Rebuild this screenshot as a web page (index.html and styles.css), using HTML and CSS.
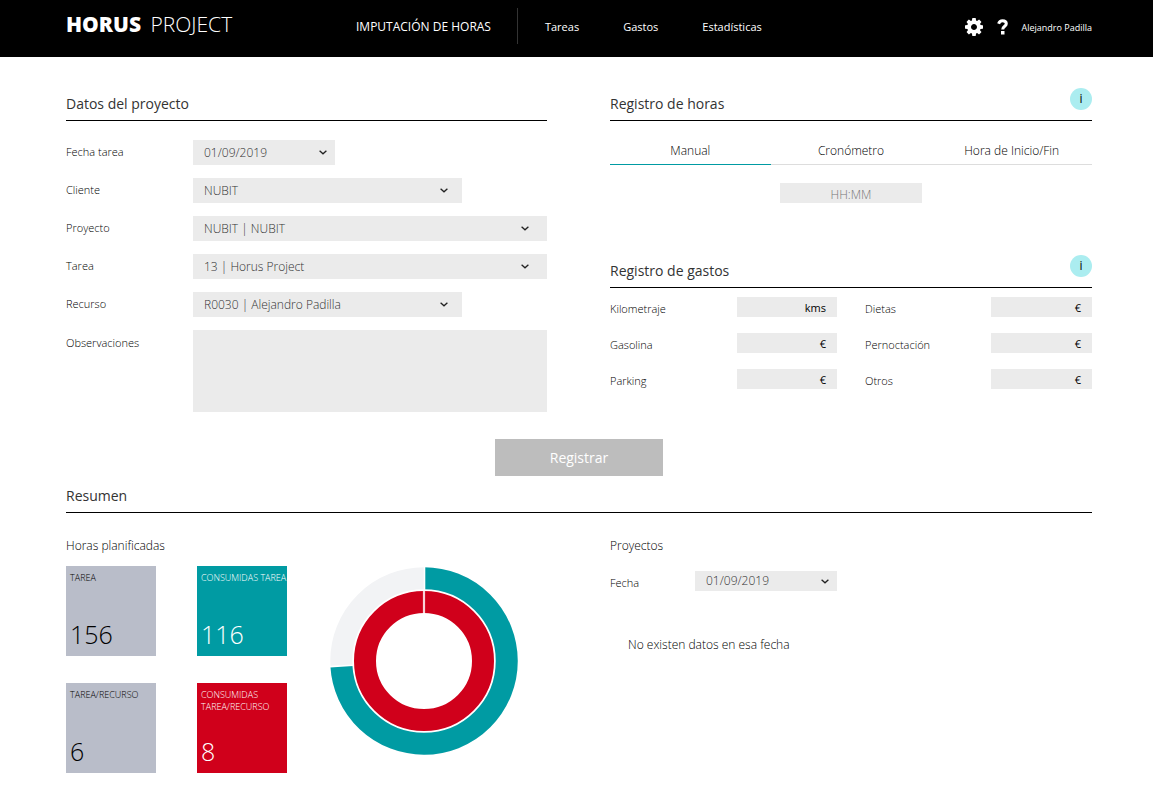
FILE: index.html
```html
<!DOCTYPE html>
<html lang="es">
<head>
<meta charset="utf-8">
<meta name="viewport" content="width=device-width, initial-scale=1">
<title>Horus Project</title>
<link rel="stylesheet" href="styles.css">
</head>
<body>
<svg class="defs" aria-hidden="true">
  <symbol id="chevron" viewBox="0 0 8 5"><path d="M0.6 0.8 L4 3.8 L7.4 0.8" fill="none" stroke="#222" stroke-width="1.3"/></symbol>
</svg>
<header class="topbar">
  <a class="brand" href="#"><strong>HORUS</strong> PROJECT</a>
  <nav class="nav">
    <a class="nav-main" href="#">IMPUTACIÓN DE HORAS</a>
    <a href="#">Tareas</a>
    <a href="#">Gastos</a>
    <a href="#">Estadísticas</a>
  </nav>
  <div class="user">
    <button class="icon-btn" type="button" aria-label="Configuración">
      <svg width="18" height="18" viewBox="0 0 1536 1536"><path fill="#fff" d="M1024 768q0-106-75-181t-181-75-181 75-75 181 75 181 181 75 181-75 75-181zm512-109v222q0 12-8 23t-20 13l-185 28q-19 54-39 91 35 50 107 138 10 12 10 25t-9 23q-27 37-99 108t-94 71q-12 0-26-9l-138-108q-44 23-91 38-16 136-29 186-7 28-36 28H657q-14 0-24.500-8.500T621 1506l-28-184q-49-16-90-37l-141 107q-10 9-25 9-14 0-25-11-126-114-165-168-7-10-7-23 0-12 8-23 15-21 51-66.500t54-70.500q-27-50-41-99L29 913q-13-2-21-12.500T0 877V655q0-12 8-23t19-13l186-28q14-46 39-92-40-57-107-138-10-12-10-24 0-10 9-23 26-36 98.500-107.500T337 135q13 0 26 10l138 107q44-23 91-38 16-136 29-186 7-28 36-28h222q14 0 24.500 8.500T915 30l28 184q49 16 90 37l142-107q9-9 24-9 13 0 25 10 129 119 165 170 7 8 7 22 0 12-8 23-15 21-51 66.500t-54 70.500q26 50 41 98l183 28q13 2 21 12.500t8 23.500z"/></svg>
    </button>
    <button class="icon-btn" type="button" aria-label="Ayuda">
      <svg width="11" height="16" viewBox="0 0 11 16"><path d="M1.600 4.800 C2.300 2.700 3.700 1.700 5.500 1.700 C7.700 1.700 9.300 2.900 9.300 4.700 C9.300 7.400 5.700 7.200 5.700 10.600" fill="none" stroke="#fff" stroke-width="3"/><rect x="4" y="12" width="3.500" height="3.500" fill="#fff"/></svg>
    </button>
    <a class="user-name" href="#">Alejandro Padilla</a>
  </div>
</header>

<main class="page">
  <form class="entry">
    <section>
      <div class="section-head"><h2>Datos del proyecto</h2></div>
      <div class="project-fields">
        <label for="fecha-tarea">Fecha tarea</label>
        <div class="select short"><select id="fecha-tarea"><option>01/09/2019</option></select><svg><use href="#chevron"/></svg></div>
        <label for="cliente">Cliente</label>
        <div class="select medium"><select id="cliente"><option>NUBIT</option></select><svg><use href="#chevron"/></svg></div>
        <label for="proyecto">Proyecto</label>
        <div class="select full"><select id="proyecto"><option>NUBIT | NUBIT</option></select><svg><use href="#chevron"/></svg></div>
        <label for="tarea">Tarea</label>
        <div class="select full"><select id="tarea"><option>13 | Horus Project</option></select><svg><use href="#chevron"/></svg></div>
        <label for="recurso">Recurso</label>
        <div class="select medium"><select id="recurso"><option>R0030 | Alejandro Padilla</option></select><svg><use href="#chevron"/></svg></div>
        <label class="label-top" for="observaciones">Observaciones</label>
        <textarea id="observaciones"></textarea>
      </div>
    </section>

    <div>
      <section class="hours">
        <div class="section-head"><h2>Registro de horas</h2><button class="info" type="button">i</button></div>
        <div class="tabs" role="tablist">
          <button class="tab active" type="button" role="tab" aria-selected="true">Manual</button>
          <button class="tab" type="button" role="tab" aria-selected="false">Cronómetro</button>
          <button class="tab" type="button" role="tab" aria-selected="false">Hora de Inicio/Fin</button>
        </div>
        <input class="time" type="text" placeholder="HH:MM" aria-label="Horas">
      </section>
      <section>
        <div class="section-head"><h2>Registro de gastos</h2><button class="info" type="button">i</button></div>
        <div class="expenses">
          <label for="km">Kilometraje</label>
          <div class="amount"><input id="km" type="text"><span>kms</span></div>
          <label for="dietas">Dietas</label>
          <div class="amount"><input id="dietas" type="text"><span>€</span></div>
          <label for="gasolina">Gasolina</label>
          <div class="amount"><input id="gasolina" type="text"><span>€</span></div>
          <label for="pernoctacion">Pernoctación</label>
          <div class="amount"><input id="pernoctacion" type="text"><span>€</span></div>
          <label for="parking">Parking</label>
          <div class="amount"><input id="parking" type="text"><span>€</span></div>
          <label for="otros">Otros</label>
          <div class="amount"><input id="otros" type="text"><span>€</span></div>
        </div>
      </section>
    </div>
    <button class="submit" type="submit">Registrar</button>
  </form>

  <section>
    <div class="section-head summary-head"><h2>Resumen</h2></div>
    <div class="summary">
      <div>
        <h3>Horas planificadas</h3>
        <div class="planned">
          <div class="tiles">
            <div class="tile grey"><span>TAREA</span><b>156</b></div>
            <div class="tile teal"><span>CONSUMIDAS TAREA</span><b>116</b></div>
            <div class="tile grey"><span>TAREA/RECURSO</span><b>6</b></div>
            <div class="tile red"><span>CONSUMIDAS TAREA/RECURSO</span><b>8</b></div>
          </div>
          <svg class="chart" width="188" height="188" viewBox="-94 -94 188 188" role="img" aria-label="Horas consumidas">
            <g fill="none" transform="rotate(-90)">
              <circle r="82.750" stroke="#f2f3f5" stroke-width="22"/>
              <circle r="82.750" stroke="#009ba3" stroke-width="22" pathLength="156" stroke-dasharray="115.500 40.500"/>
              <circle r="59" stroke="#d0001b" stroke-width="22"/>
            </g>
            <path d="M0.500 -95 V-71" stroke="#fff" stroke-width="1.600"/>
            <path d="M0 -95 V-71" stroke="#fff" stroke-width="1.600" transform="rotate(266.600)"/>
            <path d="M0 -70 V-48" stroke="#f8d3d8" stroke-width="2.200"/>
          </svg>
        </div>
      </div>
      <div>
        <h3>Proyectos</h3>
        <div class="project-date">
          <label for="fecha">Fecha</label>
          <div class="select short low"><select id="fecha"><option>01/09/2019</option></select><svg><use href="#chevron"/></svg></div>
        </div>
        <p class="empty">No existen datos en esa fecha</p>
      </div>
    </div>
  </section>
</main>
</body>
</html>
```

FILE: styles.css
```css
* { box-sizing: border-box; }
body {
  margin: 0;
  background: #fff;
  color: #000;
  font: 300 12px/16px "Open Sans", "Noto Sans", sans-serif;
}
h2, h3, p { margin: 0; font-weight: 300; }
button, input, select, textarea { font: inherit; color: inherit; border: 0; border-radius: 0; padding: 0; }
button { background: none; cursor: pointer; }
a { color: inherit; text-decoration: none; }
label { font-size: 11px; }
.defs { position: absolute; width: 0; height: 0; }

.topbar {
  display: flex;
  height: 57px;
  padding: 0 61px 0 66px;
  background: #000;
  color: #fff;
}
.brand { width: 290px; padding-top: 12px; font-size: 21px; line-height: 24px; }
.brand strong { font-weight: 800; margin-right: 4px; }
.nav { display: flex; align-items: center; gap: 44px; padding-bottom: 5px; font-size: 11px; font-weight: 400; }
.nav a { padding-top: 2px; }
.nav .nav-main { display: flex; align-items: center; height: 36px; padding-right: 26px; margin-right: -17px; border-right: 1px solid #333; font-size: 12px; }
.user { display: flex; align-items: center; margin-left: auto; padding-bottom: 4px; font-size: 9px; font-weight: 400; gap: 14px; }
.user-name { padding-top: 2px; }
.icon-btn { display: flex; }

.page { padding: 30px 61px 26px 66px; }
.entry, .summary { display: grid; grid-template-columns: 481fr 482fr; column-gap: 63px; }
.section-head {
  display: flex;
  justify-content: space-between;
  align-items: flex-start;
  height: 34px;
  border-bottom: 1px solid #000;
}
.section-head h2 { padding-top: 8px; font-size: 14px; line-height: 18px; font-weight: 400; color: #333; }
.info { width: 22px; height: 22px; margin-top: 1px; border-radius: 50%; background: #abedf0; font-weight: 400; }

.project-fields {
  display: grid;
  grid-template-columns: 127px 1fr;
  row-gap: 13px;
  align-items: center;
  padding-top: 19px;
}
.project-fields label { padding-bottom: 2px; }
.project-fields .label-top { align-self: start; padding-top: 5px; }
.select { display: grid; align-items: center; height: 25px; background: #ebebeb; color: #333; }
.select select, .select svg { grid-area: 1 / 1; }
.select select { width: 100%; height: 100%; padding: 0 30px 0 11px; background: transparent; appearance: none; }
.select svg { width: 8px; height: 5px; justify-self: end; margin-right: 22px; pointer-events: none; }
.select.short { width: 142px; }
.select.short svg { margin-right: 8px; }
.select.medium { width: 76%; }
.select.medium svg { margin-right: 14px; }
.select.full svg { margin-right: 18px; }
textarea { display: block; width: 100%; height: 82px; background: #ebebeb; resize: none; }

.hours { margin-bottom: 51px; }
.tabs { display: grid; grid-template-columns: 1fr 1fr 1fr; padding-top: 17px; }
.tab { height: 27px; border-bottom: 1px solid #ddd; }
.tab.active { border-color: #009ba3; }
.time { display: block; width: 142px; height: 20px; margin: 18px auto 0; padding-top: 2px; background: #ebebeb; text-align: center; }
.time::placeholder { color: #777; opacity: 1; }
.expenses {
  display: grid;
  grid-template-columns: 127px 1fr 127px 1fr;
  row-gap: 16px;
  padding-top: 9px;
  align-items: center;
}
.expenses label { padding-top: 4px; }
.expenses .amount:nth-child(4n + 2) { margin-right: 14px; }
.expenses label:nth-child(4n + 3) { padding-left: 14px; }
.expenses .amount:nth-child(4n) { margin-left: 13px; }
.amount { display: grid; height: 20px; background: #ebebeb; color: #000; font-weight: 400; }
.amount input, .amount span { grid-area: 1 / 1; }
.amount input { width: 100%; padding: 0 36px 0 8px; background: transparent; text-align: right; }
.amount span { justify-self: end; align-self: center; padding: 1px 11px 0 0; font-size: 11px; pointer-events: none; }
.submit {
  grid-column: 1 / -1;
  justify-self: center;
  width: 168px;
  height: 37px;
  margin-top: 27px;
  background: #bdbdbd;
  color: #fff;
  font-size: 14px;
  font-weight: 400;
}

.summary-head { height: 37px; }
.summary-head h2 { padding-top: 11px; }
.summary h3 { padding-top: 24px; font-size: 12px; line-height: 18px; }
.planned { display: flex; align-items: flex-start; gap: 43px; padding-top: 11px; }
.tiles { display: grid; grid-template-columns: 90px 90px; gap: 27px 41px; }
.tile {
  display: flex;
  flex-direction: column;
  justify-content: space-between;
  height: 90px;
  padding: 6px 0 5px 4px;
  font-size: 9px;
  line-height: 12px;
  font-weight: 300;
}
.tile b { font-size: 25px; line-height: 34px; font-weight: 300; }
.grey { background: #b9bdc9; color: #000; }
.teal { background: #009ba3; color: #fff; }
.red { background: #d0001b; color: #fff; }
.chart { margin-top: 1px; }
.project-date { display: flex; padding-top: 16px; }
.project-date label { width: 85px; padding-top: 4px; }
.select.low { height: 20px; }
.empty { padding: 46px 0 0 18px; }
```
